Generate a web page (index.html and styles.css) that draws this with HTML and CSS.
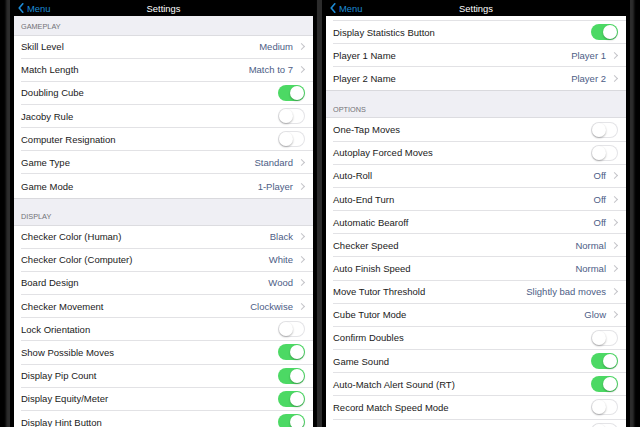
FILE: index.html
```html
<!DOCTYPE html>
<html>
<head>
  <meta charset="UTF-8">
  <title>Settings</title>
  <link rel="stylesheet" href="styles.css">
</head>
<body>
<div class="screens">

  <div class="screen left">
    <div class="navbar">
      <a class="back" href="javascript:">
        <svg width="6" height="10" viewBox="0 0 6 10"><path d="M4.8 0.8 L1.2 5 L4.8 9.2" fill="none" stroke="#1d8cd6" stroke-width="1.6" stroke-linecap="round" stroke-linejoin="round"/></svg>
        Menu
      </a>
      <p class="title">Settings</p>
    </div>

    <div class="section-head first">GAMEPLAY</div>
    <div class="group">
      <div class="row"><span class="label">Skill Level</span><span class="value">Medium</span><i class="chev"></i></div>
      <div class="row"><span class="label">Match Length</span><span class="value">Match to 7</span><i class="chev"></i></div>
      <div class="row"><span class="label">Doubling Cube</span><span class="toggle on"></span></div>
      <div class="row"><span class="label">Jacoby Rule</span><span class="toggle"></span></div>
      <div class="row"><span class="label">Computer Resignation</span><span class="toggle"></span></div>
      <div class="row"><span class="label">Game Type</span><span class="value">Standard</span><i class="chev"></i></div>
      <div class="row"><span class="label">Game Mode</span><span class="value">1-Player</span><i class="chev"></i></div>
    </div>

    <div class="section-head">DISPLAY</div>
    <div class="group">
      <div class="row"><span class="label">Checker Color (Human)</span><span class="value">Black</span><i class="chev"></i></div>
      <div class="row"><span class="label">Checker Color (Computer)</span><span class="value">White</span><i class="chev"></i></div>
      <div class="row"><span class="label">Board Design</span><span class="value">Wood</span><i class="chev"></i></div>
      <div class="row"><span class="label">Checker Movement</span><span class="value">Clockwise</span><i class="chev"></i></div>
      <div class="row"><span class="label">Lock Orientation</span><span class="toggle"></span></div>
      <div class="row"><span class="label">Show Possible Moves</span><span class="toggle on"></span></div>
      <div class="row"><span class="label">Display Pip Count</span><span class="toggle on"></span></div>
      <div class="row"><span class="label">Display Equity/Meter</span><span class="toggle on"></span></div>
      <div class="row"><span class="label">Display Hint Button</span><span class="toggle on"></span></div>
    </div>
  </div>

  <div class="screen right">
    <div class="navbar">
      <a class="back" href="javascript:">
        <svg width="6" height="10" viewBox="0 0 6 10"><path d="M4.8 0.8 L1.2 5 L4.8 9.2" fill="none" stroke="#1d8cd6" stroke-width="1.6" stroke-linecap="round" stroke-linejoin="round"/></svg>
        Menu
      </a>
      <p class="title">Settings</p>
    </div>

    <div class="group">
      <div class="row cut"></div>
      <div class="row"><span class="label">Display Statistics Button</span><span class="toggle on"></span></div>
      <div class="row"><span class="label">Player 1 Name</span><span class="value">Player 1</span><i class="chev"></i></div>
      <div class="row"><span class="label">Player 2 Name</span><span class="value">Player 2</span><i class="chev"></i></div>
    </div>

    <div class="section-head">OPTIONS</div>
    <div class="group">
      <div class="row"><span class="label">One-Tap Moves</span><span class="toggle"></span></div>
      <div class="row"><span class="label">Autoplay Forced Moves</span><span class="toggle"></span></div>
      <div class="row"><span class="label">Auto-Roll</span><span class="value">Off</span><i class="chev"></i></div>
      <div class="row"><span class="label">Auto-End Turn</span><span class="value">Off</span><i class="chev"></i></div>
      <div class="row"><span class="label">Automatic Bearoff</span><span class="value">Off</span><i class="chev"></i></div>
      <div class="row"><span class="label">Checker Speed</span><span class="value">Normal</span><i class="chev"></i></div>
      <div class="row"><span class="label">Auto Finish Speed</span><span class="value">Normal</span><i class="chev"></i></div>
      <div class="row"><span class="label">Move Tutor Threshold</span><span class="value">Slightly bad moves</span><i class="chev"></i></div>
      <div class="row"><span class="label">Cube Tutor Mode</span><span class="value">Glow</span><i class="chev"></i></div>
      <div class="row"><span class="label">Confirm Doubles</span><span class="toggle"></span></div>
      <div class="row"><span class="label">Game Sound</span><span class="toggle on"></span></div>
      <div class="row"><span class="label">Auto-Match Alert Sound (RT)</span><span class="toggle on"></span></div>
      <div class="row"><span class="label">Record Match Speed Mode</span><span class="toggle"></span></div>
      <div class="row"><span class="label"></span><span class="toggle"></span></div>
    </div>
  </div>

</div>
</body>
</html>
```

FILE: styles.css
```css
body {
  margin: 0;
  background-color: #000;
  font-family: "Liberation Sans", Arial, sans-serif;
}

.screens {
  display: flex;
  gap: 13px;
  padding-left: 14px;
  height: 427px;
  overflow: hidden;
}

.screen {
  background-color: #efeff4;
  height: 427px;
  overflow: hidden;
  box-shadow: 0 0 0 4px #000, 0 0 2px 8px #2c2c2c;
}

.screen.left {
  width: 299px;
}

.screen.right {
  width: 300px;
}

/* top bar */
.navbar {
  height: 16px;
  background-color: #000;
  display: flex;
  align-items: center;
  justify-content: center;
  position: relative;
}

.navbar .title {
  margin: 0;
  color: #fff;
  font-size: 9.4px;
  line-height: 17px;
}

.back {
  position: absolute;
  left: 4px;
  top: 0;
  height: 16px;
  display: flex;
  align-items: center;
  gap: 3px;
  color: #1d8cd6;
  font-size: 9.4px;
  text-decoration: none;
}

/* sections */
.section-head {
  height: 27px;
  box-sizing: border-box;
  display: flex;
  align-items: flex-end;
  padding: 0 0 3.5px 7px;
  font-size: 7.3px;
  line-height: 8px;
  color: #727277;
  border-bottom: 1px solid #dcdce0;
}

.section-head.first {
  height: 19.5px;
}

.group {
  background-color: #fff;
  border-bottom: 1px solid #d9d9dd;
}

.row {
  height: 23.17px;
  box-sizing: border-box;
  margin-left: 7px;
  padding-right: 8px;
  display: flex;
  align-items: center;
  border-bottom: 1px solid #e2e2e5;
  font-size: 9.5px;
}

.row:last-child {
  border-bottom: none;
}

.row.cut {
  height: 5px;
}

.label {
  flex: 1;
  color: #1a1a1a;
  white-space: nowrap;
}

.value {
  color: #4d5d86;
}

.chev {
  width: 4px;
  height: 4px;
  margin-left: 6px;
  margin-right: 1px;
  border-top: 1px solid #c4c4c9;
  border-right: 1px solid #c4c4c9;
  transform: rotate(45deg);
}

/* switches */
.toggle {
  position: relative;
  width: 27px;
  height: 16px;
  box-sizing: border-box;
  border-radius: 8px;
  background-color: #fff;
  box-shadow: inset 0 0 0 1px #e4e4e7;
}

.toggle::after {
  content: "";
  position: absolute;
  top: 1px;
  left: 1px;
  width: 14px;
  height: 14px;
  border-radius: 50%;
  background-color: #fff;
  box-shadow: 0 1px 2px rgba(0, 0, 0, 0.3);
}

.toggle.on {
  background-color: #4cd964;
  box-shadow: none;
}

.toggle.on::after {
  left: 12px;
}
```
